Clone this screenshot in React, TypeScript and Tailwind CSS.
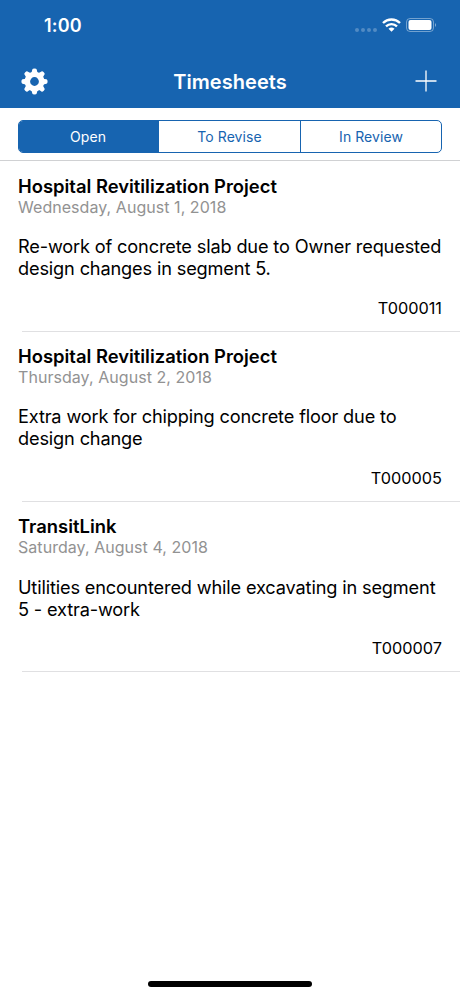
const tabs = ['Open', 'To Revise', 'In Review'];

const timesheets = [
  {
    id: 'T000011',
    project: 'Hospital Revitilization Project',
    date: 'Wednesday, August 1, 2018',
    lines: ['Re-work of concrete slab due to Owner requested', 'design changes in segment 5.'],
  },
  {
    id: 'T000005',
    project: 'Hospital Revitilization Project',
    date: 'Thursday, August 2, 2018',
    lines: ['Extra work for chipping concrete floor due to', 'design change'],
  },
  {
    id: 'T000007',
    project: 'TransitLink',
    date: 'Saturday, August 4, 2018',
    lines: ['Utilities encountered while excavating in segment', '5 - extra-work'],
  },
];

function GearIcon() {
  return (
    <svg className="ml-px" width="27" height="27" viewBox="-13.5 -13.5 27 27">
      <circle r="7.1" fill="none" stroke="white" strokeWidth="5.4" />
      {[0, 45, 90, 135, 180, 225, 270, 315].map(angle => (
        <path key={angle} d="M-3.6-8.5Q-2.5-9.5-2.2-12Q-2-13.1 0-13.1Q2-13.1 2.2-12Q2.5-9.5 3.6-8.5z" fill="white" transform={`rotate(${angle})`} />
      ))}
    </svg>
  );
}

export default function App() {
  return (
    <div className="flex h-[996px] w-[460px] flex-col overflow-hidden bg-white font-[Inter,sans-serif] text-black">
      <header className="h-[108px] bg-[#1764b0] text-white">
        {/* Status bar */}
        <div className="flex h-[54px] items-center justify-between pb-1 pl-11 pr-[22px]">
          <span className="text-[18px] font-semibold tracking-[0.2px]">1:00</span>
          <div className="flex items-center">
            <div className="mr-[5px] mt-[9px] flex gap-[2px]">
              {[0, 1, 2, 3].map(i => (
                <span key={i} className="size-1 rounded-full bg-white/25" />
              ))}
            </div>
            <svg width="19" height="14" viewBox="0 0 19 14" fill="none" stroke="currentColor" strokeWidth="2.4">
              <path d="M1 5a12.2 12.2 0 0 1 17 0M4 8.3a8 8 0 0 1 11 0" />
              <path d="M6.5 10.8a4.4 4.4 0 0 1 6 0l-3 3z" fill="currentColor" stroke="none" />
            </svg>
            <svg className="ml-[5px]" width="32" height="14" viewBox="0 0 32 14" fill="none">
              <rect x=".5" y=".5" width="27" height="13" rx="3.5" stroke="white" strokeOpacity=".4" />
              <rect x="2.5" y="2" width="23" height="10" rx="2" fill="white" />
              <path d="M29 5q2 2 0 4z" fill="white" fillOpacity=".5" />
            </svg>
          </div>
        </div>

        {/* Navigation bar */}
        <div className="grid h-[54px] grid-cols-3 items-center pl-5 pr-[23px]">
          <GearIcon />
          <h1 className="ml-[3px] pt-px text-center text-[20px] font-semibold tracking-[0.05px]">Timesheets</h1>
          <svg className="justify-self-end" width="22" height="22" viewBox="0 0 22 22" stroke="currentColor" strokeWidth="1.3">
            <path d="M11 .5v21M.5 11h21" />
          </svg>
        </div>
      </header>

      <div className="h-[53px] border-b border-[#d0d1d3] px-[18px] pt-3">
        <div className="grid h-[33px] grid-cols-[140px_1fr_141px] overflow-hidden rounded-[5px] border border-[#1764b0]">
          {tabs.map((tab, i) => (
            <button
              key={tab}
              className={`text-[14px] tracking-[0.06px] ${i === 0 ? 'bg-[#1764b0] pr-[2px] text-white' : 'text-[#1764b0]'} ${i === 2 ? 'border-l border-[#1764b0]' : ''}`}
            >
              {tab}
            </button>
          ))}
        </div>
      </div>

      <main className="pt-[0.4px]">
        {timesheets.map(t => (
          <article key={t.id} className="h-[170.2px] pl-[18px]">
            <div className="h-full pr-[18px] pt-[13.6px]">
              <h2 className="text-[18.4px] font-semibold leading-[22px]">{t.project}</h2>
              <p className="text-[16px] leading-[21px] tracking-[0.05px] text-[#929292]">{t.date}</p>
              <div className="mt-[17.3px] text-[18.2px] leading-[22px] tracking-[-0.16px]">
                {t.lines.map(line => (
                  <p key={line} className="whitespace-nowrap">{line}</p>
                ))}
              </div>
              <p className="mt-[18.6px] text-right text-[16.3px] leading-[20px]">{t.id}</p>
            </div>
            <div className="-mt-[0.6px] ml-1 h-px bg-[#e0e0e2]" />
          </article>
        ))}
      </main>

      {/* Home indicator */}
      <div className="mx-auto mb-[9px] mt-auto h-[6px] w-[164px] rounded-full bg-black" />
    </div>
  );
}
